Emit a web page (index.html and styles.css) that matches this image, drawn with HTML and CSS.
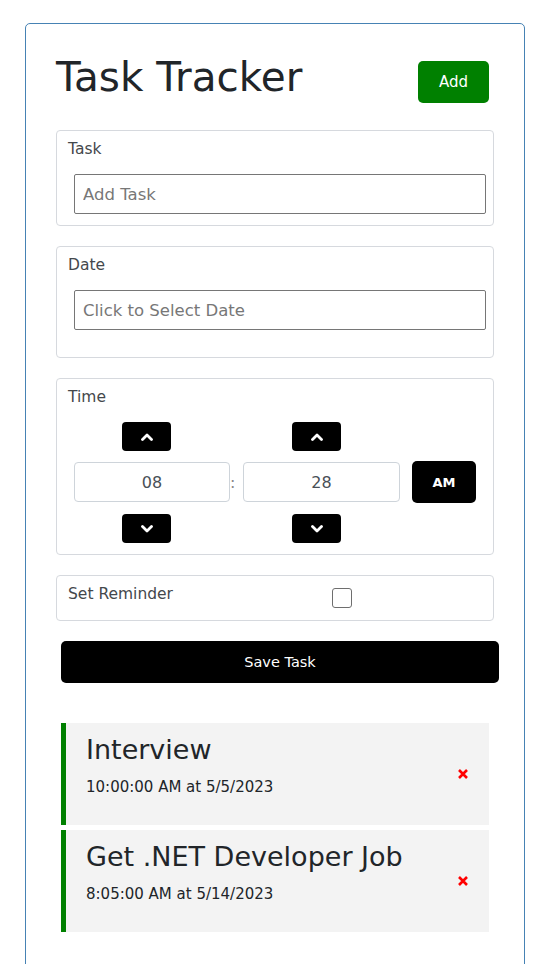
FILE: index.html
```html
<!DOCTYPE html>
<html lang="en">
<head>
<meta charset="utf-8">
<title>Task Tracker</title>
<link rel="stylesheet" href="styles.css">
</head>
<body>
<div class="container">
  <header class="header">
    <h1 class="title">Task Tracker</h1>
    <button class="btn btn-add" type="button">Add</button>
  </header>
  <form class="form">
    <div class="field">
      <label class="field-label">Task</label>
      <input class="text-input" type="text" placeholder="Add Task">
    </div>
    <div class="field field-date">
      <label class="field-label">Date</label>
      <input class="text-input" type="text" placeholder="Click to Select Date">
    </div>
    <div class="field field-time">
      <label class="field-label">Time</label>
      <div class="time-grid">
        <button class="spin spin-up spin-hour" type="button"><svg class="chev" viewBox="0 0 12 8" width="12" height="8"><polyline points="1.5,6.5 6,2 10.5,6.5"/></svg></button>
        <button class="spin spin-up spin-min" type="button"><svg class="chev" viewBox="0 0 12 8" width="12" height="8"><polyline points="1.5,6.5 6,2 10.5,6.5"/></svg></button>
        <input class="time-input time-hour" type="text" value="08">
        <span class="colon">:</span>
        <input class="time-input time-min" type="text" value="28">
        <button class="btn-ampm" type="button">AM</button>
        <button class="spin spin-down spin-hour" type="button"><svg class="chev" viewBox="0 0 12 8" width="12" height="8"><polyline points="1.5,1.5 6,6 10.5,1.5"/></svg></button>
        <button class="spin spin-down spin-min" type="button"><svg class="chev" viewBox="0 0 12 8" width="12" height="8"><polyline points="1.5,1.5 6,6 10.5,1.5"/></svg></button>
      </div>
    </div>
    <div class="field field-check">
      <label class="field-label check-label">Set Reminder</label>
      <input class="check" type="checkbox">
    </div>
    <button class="btn btn-save" type="button">Save Task</button>
  </form>
  <div class="tasks">
    <div class="task">
      <div class="task-text">
        <h3 class="task-title">Interview</h3>
        <p class="task-when">10:00:00 AM at 5/5/2023</p>
      </div>
      <svg class="task-del" viewBox="0 0 10 10" width="10" height="10"><path d="M1 1 L9 9 M9 1 L1 9"/></svg>
    </div>
    <div class="task">
      <div class="task-text">
        <h3 class="task-title">Get .NET Developer Job</h3>
        <p class="task-when">8:05:00 AM at 5/14/2023</p>
      </div>
      <svg class="task-del" viewBox="0 0 10 10" width="10" height="10"><path d="M1 1 L9 9 M9 1 L1 9"/></svg>
    </div>
  </div>
</div>
</body>
</html>
```

FILE: styles.css
```css
* {
  box-sizing: border-box;
}

body {
  margin: 0;
  background: #fff;
  font-family: "DejaVu Sans", sans-serif;
  color: #212529;
}

.container {
  width: 500px;
  margin: 23px 0 0 25px;
  border: 1px solid steelblue;
  border-radius: 5px;
  padding: 30px 30px 50px;
}

.header {
  display: flex;
  justify-content: space-between;
  align-items: flex-start;
  margin-bottom: 27px;
}

.title {
  margin: 0;
  font-size: 40.5px;
  line-height: 46px;
  font-weight: 400;
  color: #212529;
}

.btn {
  border: none;
  border-radius: 5px;
  color: #fff;
  font-family: inherit;
  cursor: pointer;
}

.btn-add {
  width: 71px;
  height: 42px;
  margin: 7px 5px 0 0;
  background: #008000;
  font-size: 15px;
}

.form {
  display: flex;
  flex-direction: column;
  gap: 20px;
}

.field {
  border: 1px solid #d6d9de;
  border-radius: 4px;
  padding: 8px 7px 11px 11px;
  display: flex;
  flex-direction: column;
  align-items: flex-start;
}

.field-date {
  padding-bottom: 27px;
}

.field-label {
  font-size: 15.5px;
  line-height: 20px;
  color: #44484c;
}

.text-input {
  width: 412px;
  height: 40px;
  margin: 15px 0 0 6px;
  border: 1px solid #767676;
  border-radius: 2px;
  padding: 0 8px;
  font-family: inherit;
  font-size: 16.5px;
  color: #212529;
  background: #fff;
}

.text-input::placeholder {
  color: #777;
}

.time-grid {
  margin: 15px 0 0 6px;
  display: grid;
  grid-template-columns: 156px 13px 157px 76px;
  grid-template-rows: 29px 42px 30px;
  row-gap: 10px;
}

.spin {
  width: 49px;
  height: 29px;
  border: none;
  border-radius: 4px;
  background: #000;
  display: flex;
  align-items: center;
  justify-content: center;
  padding: 0;
  cursor: pointer;
}

.spin-up {
  grid-row: 1;
}

.spin-down {
  grid-row: 3;
  align-self: end;
}

.spin-hour {
  grid-column: 1;
  justify-self: start;
  margin-left: 48px;
}

.spin-min {
  grid-column: 3;
  justify-self: start;
  margin-left: 49px;
}

.chev polyline {
  fill: none;
  stroke: #fff;
  stroke-width: 2.8;
  stroke-linecap: round;
  stroke-linejoin: round;
}

.time-input {
  grid-row: 2;
  align-self: center;
  height: 40px;
  border: 1px solid #ced4da;
  border-radius: 4px;
  text-align: center;
  font-family: inherit;
  font-size: 16px;
  color: #495057;
  background: #fff;
  padding: 0;
}

.time-hour {
  grid-column: 1;
  width: 156px;
}

.time-min {
  grid-column: 3;
  width: 157px;
}

.colon {
  grid-row: 2;
  grid-column: 2;
  align-self: center;
  justify-self: start;
  font-size: 16px;
  color: #888;
}

.btn-ampm {
  grid-row: 2;
  grid-column: 4;
  justify-self: end;
  width: 64px;
  height: 42px;
  border: none;
  border-radius: 5px;
  background: #000;
  color: #fff;
  font-family: inherit;
  font-weight: 700;
  font-size: 13px;
}

.field-check {
  flex-direction: row;
  padding-bottom: 12px;
}

.check-label {
  flex: 0 0 264px;
}

.check {
  appearance: none;
  -webkit-appearance: none;
  width: 20px;
  height: 20px;
  margin: 4px 0 0 0;
  border: 1px solid #6e6e6e;
  border-radius: 3px;
  background: #fff;
}

.btn-save {
  width: 438px;
  height: 42px;
  margin: 0 0 0 5px;
  background: #000;
  font-size: 14.5px;
}

.tasks {
  margin-top: 40px;
  display: flex;
  flex-direction: column;
  gap: 5px;
}

.task {
  width: 428px;
  margin-left: 5px;
  background: #f3f3f3;
  border-left: 5px solid #008000;
  padding: 10px 20px;
  display: flex;
  align-items: center;
  justify-content: space-between;
}

.task-text {
  padding-bottom: 18px;
}

.task-title {
  margin: 1px 0 0;
  font-size: 27px;
  line-height: 32px;
  font-weight: 400;
  color: #212529;
}

.task-when {
  margin: 11px 0 0;
  font-size: 15px;
  line-height: 20px;
  color: #212529;
}

.task-del {
  flex: none;
  margin-right: 1px;
}

.task-del path {
  stroke: #f00;
  stroke-width: 2.6;
  fill: none;
}
```
